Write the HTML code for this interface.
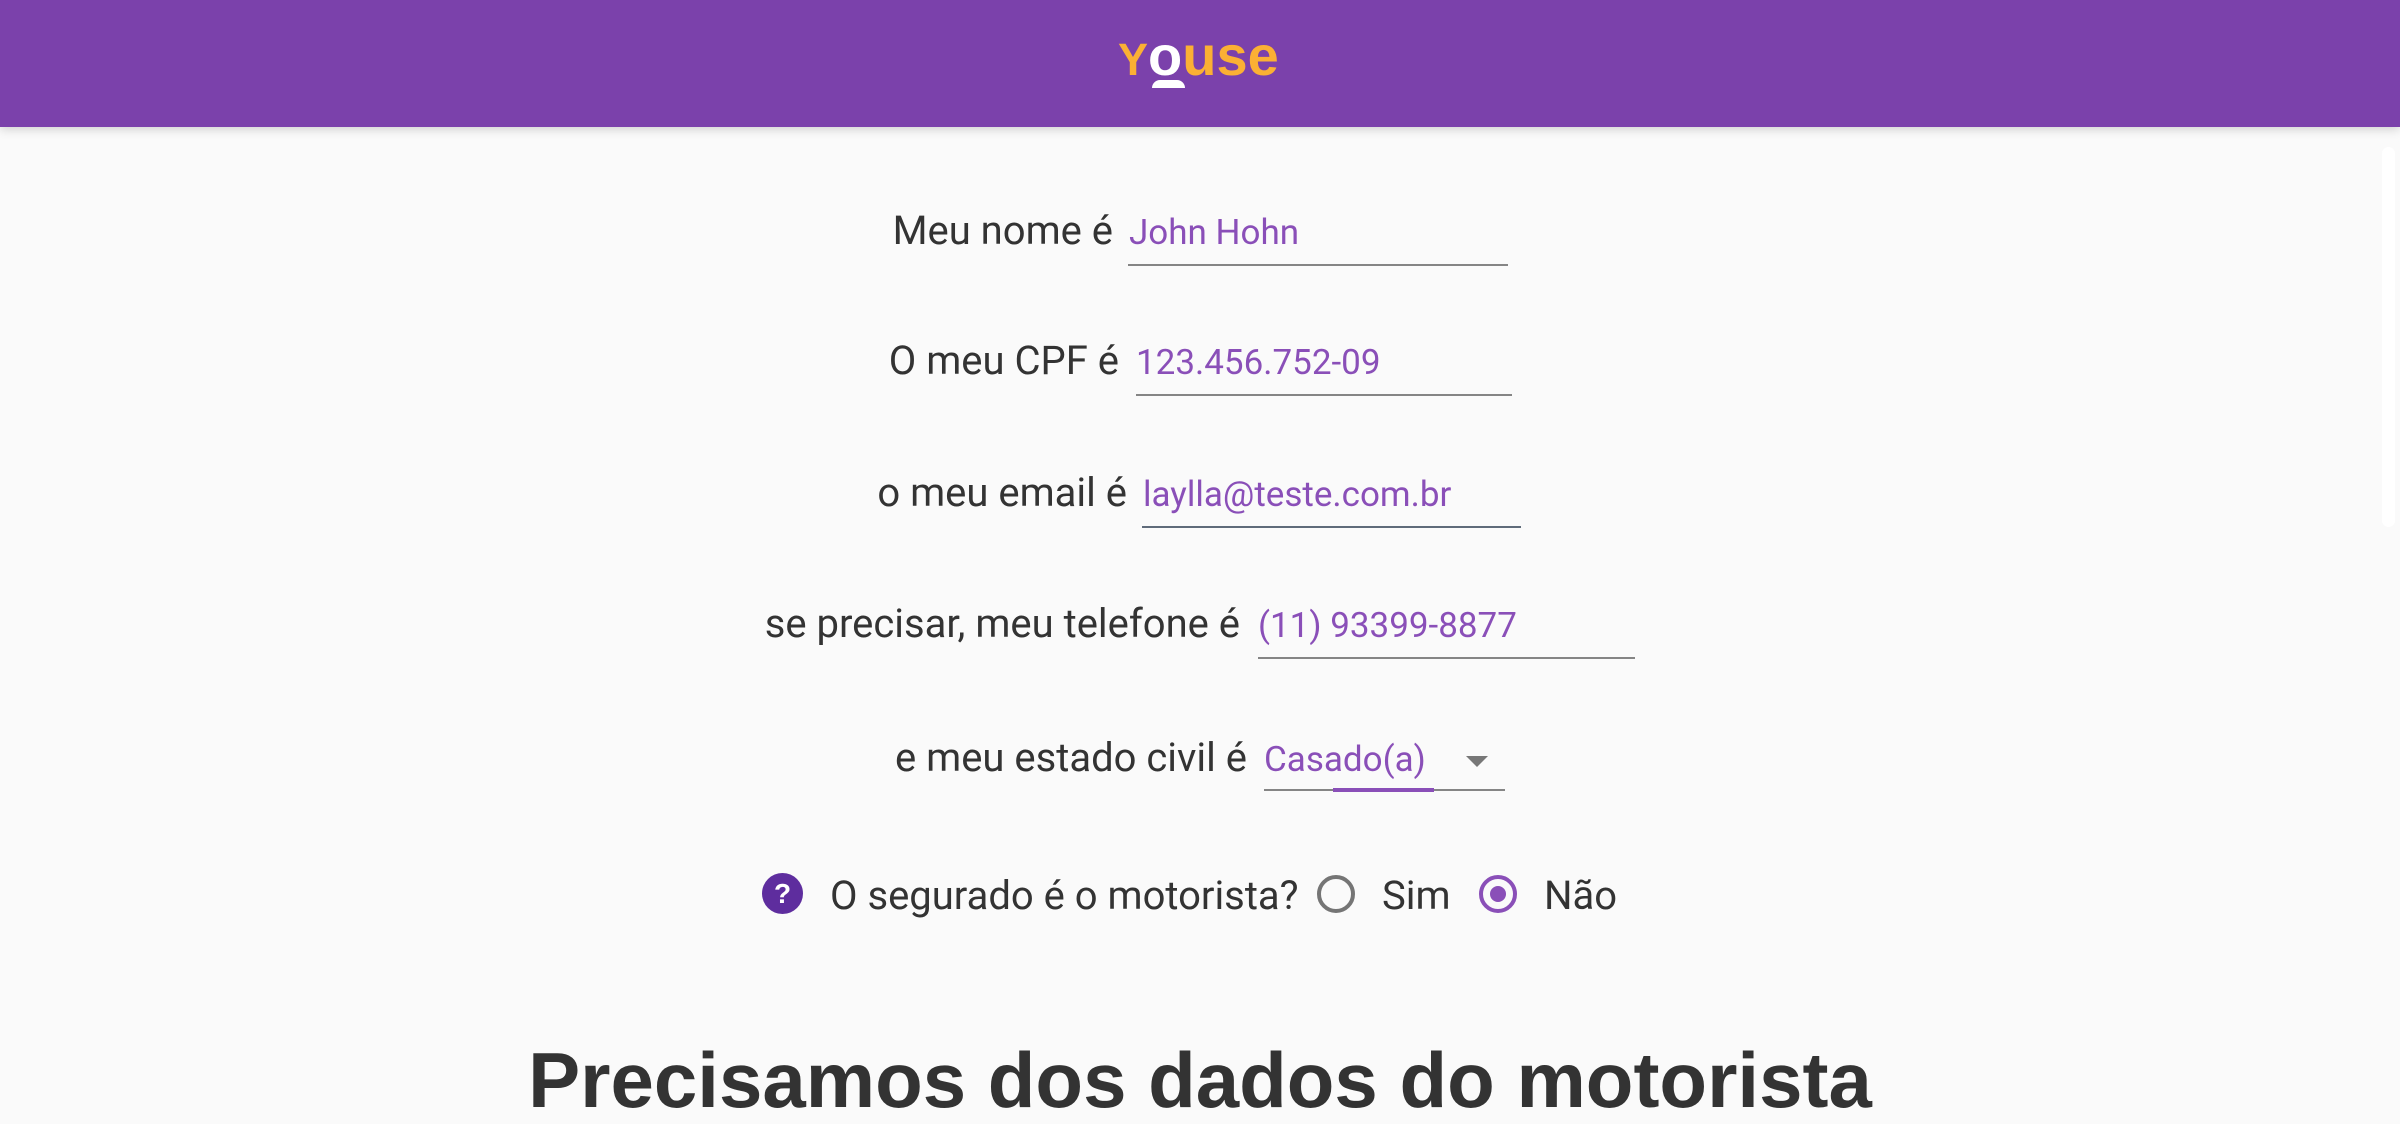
<!DOCTYPE html>
<html><head><meta charset="utf-8">
<style>
html,body{margin:0;padding:0;}
body{width:2400px;height:1070px;overflow:hidden;background:#fafafa;position:relative;font-family:"Roboto","Liberation Sans",sans-serif;color:#333;}
.hdr{position:absolute;left:0;top:0;width:2400px;height:127px;background:#7b41ab;box-shadow:0 2px 10px rgba(0,0,0,0.18);}
.logo{position:absolute;left:1118px;top:28px;font:bold 56px/56px "Liberation Sans",sans-serif;letter-spacing:0px;color:#fbb034;white-space:nowrap;}
.logo .y{font-size:45px;}
.logo .o{color:#fff;}
.bar{position:absolute;left:1152px;top:80px;width:33px;height:8px;background:#fff;border-radius:8px 8px 0 0;}
.lab{position:absolute;font-size:40px;line-height:40px;white-space:nowrap;color:#333;text-align:right;}
.val{position:absolute;font-size:35px;line-height:35px;white-space:nowrap;color:#8a4fb8;}
.ul{position:absolute;height:2px;background:#858585;}
.sb{position:absolute;left:2382px;top:147px;width:13px;height:380px;background:#fff;border-radius:7px;}
.radio{position:absolute;width:38px;height:38px;box-sizing:border-box;border-radius:50%;}
h1{position:absolute;left:0;width:2400px;text-align:center;top:1041px;margin:0;font:bold 78px/78px "Liberation Sans",sans-serif;color:#333;white-space:nowrap;}
</style></head><body>
<div class="hdr"><div class="logo"><span class="y">Y</span><span class="o">o</span>use</div><div class="bar"></div></div>
<div class="sb"></div>

<div class="lab" style="right:1287px;top:211px">Meu nome é</div>
<div class="val" style="left:1129px;top:215px">John Hohn</div>
<div class="ul" style="left:1128px;width:380px;top:264px"></div>

<div class="lab" style="right:1281px;top:341px">O meu CPF é</div>
<div class="val" style="left:1136px;top:345px">123.456.752-09</div>
<div class="ul" style="left:1136px;width:376px;top:394px"></div>

<div class="lab" style="right:1273px;top:473px">o meu email é</div>
<div class="val" style="left:1143px;top:477px">laylla@teste.com.br</div>
<div class="ul" style="left:1142px;width:379px;top:526px;background:#5f6b7a"></div>

<div class="lab" style="right:1160px;top:604px">se precisar, meu telefone é</div>
<div class="val" style="left:1258px;top:608px">(11) 93399-8877</div>
<div class="ul" style="left:1258px;width:377px;top:657px"></div>

<div class="lab" style="right:1153px;top:738px">e meu estado civil é</div>
<div class="val" style="left:1264px;top:742px">Casado(a)</div>
<div style="position:absolute;left:1466px;top:756px;width:0;height:0;border-left:11px solid transparent;border-right:11px solid transparent;border-top:11px solid #777"></div>
<div class="ul" style="left:1264px;width:241px;top:789px"></div>
<div class="ul" style="left:1333px;width:101px;top:788px;height:4px;background:#8a4fb8"></div>

<div style="position:absolute;left:762px;top:873px;width:41px;height:41px;border-radius:50%;background:#5e2d9e;color:#fff;font:bold 28px/41px 'Liberation Sans',sans-serif;text-align:center">?</div>
<div class="lab" style="left:830px;top:876px;text-align:left">O segurado é o motorista?</div>
<div class="radio" style="left:1317px;top:875px;border:4px solid #757575"></div>
<div class="lab" style="left:1382px;top:876px;text-align:left">Sim</div>
<div class="radio" style="left:1479px;top:875px;border:4px solid #8a4fb8"><div style="position:absolute;left:7px;top:7px;width:16px;height:16px;border-radius:50%;background:#8a4fb8"></div></div>
<div class="lab" style="left:1544px;top:876px;text-align:left">Não</div>

<h1>Precisamos dos dados do motorista</h1>
</body></html>
